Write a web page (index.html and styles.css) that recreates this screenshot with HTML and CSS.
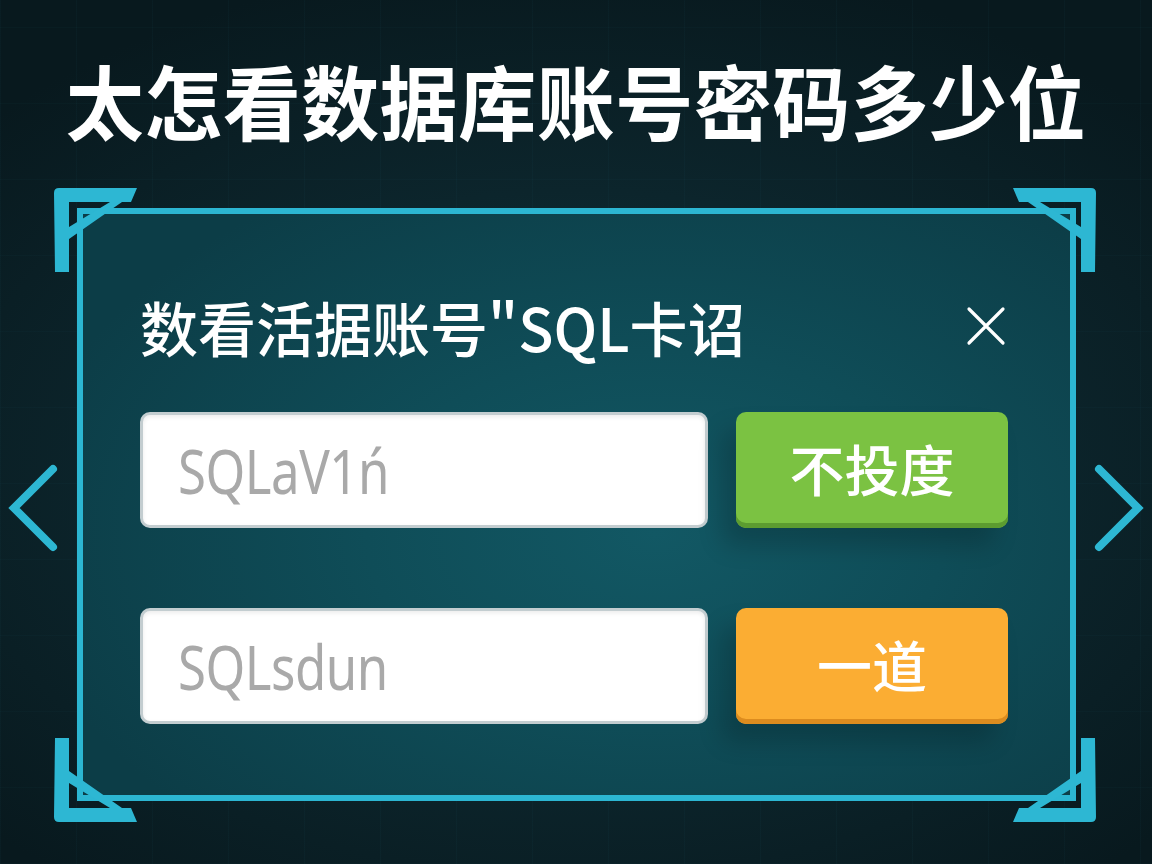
FILE: index.html
```html
<!DOCTYPE html>
<html lang="zh">
<head>
<meta charset="utf-8">
<title>太怎看数据库账号密码多少位</title>
<link rel="stylesheet" href="styles.css">
</head>
<body>
<div class="page">
  <h1 class="headline">太怎看数据库账号密码多少位</h1>

  <section class="panel">
    <header class="dialog-head">
      <h2 class="dialog-title">数看活据账号"SQL卡诏</h2>
      <button class="close" aria-label="关闭">
        <svg viewBox="0 0 40 40" width="40" height="40"><path d="M3 3 L37 37 M37 3 L3 37" stroke="#ffffff" stroke-width="3.2" stroke-linecap="round" fill="none"/></svg>
      </button>
    </header>
    <div class="row">
      <div class="field"><span class="placeholder">SQLaV1ń</span></div>
      <button class="btn btn-green">不投度</button>
    </div>
    <div class="row row-second">
      <div class="field"><span class="placeholder">SQLsdun</span></div>
      <button class="btn btn-orange">一道</button>
    </div>
  </section>

  <svg class="bracket br-tl" viewBox="0 0 84 86" width="84" height="86"><path d="M0 6 Q0 1 5 1 L83 1 L77 15 L15 15 L15 85 L1 85 Z M15 40 L56 15 L68 15 L15 52 Z" fill="#2db7d3"/></svg>
  <svg class="bracket br-tr" viewBox="0 0 84 86" width="84" height="86"><path d="M0 6 Q0 1 5 1 L83 1 L77 15 L15 15 L15 85 L1 85 Z M15 40 L56 15 L68 15 L15 52 Z" fill="#2db7d3"/></svg>
  <svg class="bracket br-bl" viewBox="0 0 84 86" width="84" height="86"><path d="M0 6 Q0 1 5 1 L83 1 L77 15 L15 15 L15 85 L1 85 Z M15 40 L56 15 L68 15 L15 52 Z" fill="#2db7d3"/></svg>
  <svg class="bracket br-br" viewBox="0 0 84 86" width="84" height="86"><path d="M0 6 Q0 1 5 1 L83 1 L77 15 L15 15 L15 85 L1 85 Z M15 40 L56 15 L68 15 L15 52 Z" fill="#2db7d3"/></svg>

  <svg class="chev chev-left" viewBox="0 0 52 92" width="52" height="92"><polyline points="45,7 6,46 45,85" fill="none" stroke="#2db7d3" stroke-width="8" stroke-linecap="round" stroke-linejoin="miter"/></svg>
  <svg class="chev chev-right" viewBox="0 0 52 92" width="52" height="92"><polyline points="7,7 46,46 7,85" fill="none" stroke="#2db7d3" stroke-width="8" stroke-linecap="round" stroke-linejoin="miter"/></svg>
</div>
</body>
</html>
```

FILE: styles.css
```css
html, body {
  margin: 0;
  padding: 0;
}

body {
  width: 1152px;
  height: 864px;
  overflow: hidden;
  background: #0a1d23;
  font-family: "Noto Sans", "Noto Sans CJK SC", sans-serif;
}

.page {
  position: relative;
  width: 1152px;
  height: 864px;
  overflow: hidden;
  background:
    repeating-linear-gradient(90deg, rgba(40, 120, 140, 0.05) 0 1px, transparent 1px 76px),
    repeating-linear-gradient(0deg, rgba(40, 120, 140, 0.04) 0 1px, transparent 1px 76px),
    radial-gradient(ellipse 70% 60% at 50% 55%, #12363f 0%, #0c252c 55%, #08191e 100%);
}

.headline {
  margin: 0;
  padding-top: 58px;
  height: 78px;
  line-height: 78px;
  text-align: center;
  font-family: "Noto Sans CJK SC", sans-serif;
  font-weight: 700;
  font-size: 78px;
  color: #ffffff;
  letter-spacing: 0.5px;
  white-space: nowrap;
  transform: scaleY(1.04);
}

.panel {
  box-sizing: border-box;
  margin: 72px 0 0 77px;
  width: 999px;
  height: 593px;
  border: 6px solid #2cb6d2;
  background:
    radial-gradient(ellipse 65% 70% at 58% 55%, #125864 0%, #0f4d58 45%, #0c3d47 100%);
  padding: 0 62px 0 57px;
  display: flex;
  flex-direction: column;
}

.dialog-head {
  display: flex;
  align-items: center;
  justify-content: space-between;
  height: 80px;
  margin-top: 72px;
  margin-bottom: 46px;
}

.dialog-title {
  margin: 0;
  font-family: "Noto Sans CJK SC", sans-serif;
  font-weight: 500;
  font-size: 58px;
  line-height: 80px;
  color: #ffffff;
  white-space: nowrap;
  display: inline-block;
  transform: scaleY(1.02);
  transform-origin: 0 50%;
}

.close {
  width: 40px;
  height: 40px;
  padding: 0;
  margin-right: 2px;
  border: none;
  background: transparent;
  display: flex;
}

.row {
  display: flex;
  gap: 28px;
  height: 116px;
}

.row-second {
  margin-top: 80px;
}

.field {
  box-sizing: border-box;
  width: 568px;
  height: 116px;
  background: #ffffff;
  border: 3px solid #c3cdd0;
  border-radius: 10px;
  box-shadow: inset 0 2px 4px rgba(0, 0, 0, 0.08);
  display: flex;
  align-items: center;
  padding-left: 35px;
}

.placeholder {
  display: inline-block;
  font-family: "Noto Sans", sans-serif;
  font-size: 51px;
  color: #a9a9a9;
  letter-spacing: -0.5px;
  transform: scaleY(1.2);
}

.btn {
  box-sizing: border-box;
  width: 272px;
  height: 116px;
  border: none;
  border-radius: 10px;
  font-family: "Noto Sans CJK SC", sans-serif;
  font-weight: 500;
  font-size: 55px;
  color: #ffffff;
  padding: 0 0 6px 0;
  display: flex;
  align-items: center;
  justify-content: center;
}

.btn-green {
  background: #7bc242;
  box-shadow: inset 0 -5px 0 #5c9c30, -14px 18px 24px rgba(0, 0, 0, 0.18);
}

.btn-orange {
  background: #fbad33;
  box-shadow: inset 0 -5px 0 #dc8c1f, -14px 18px 24px rgba(0, 0, 0, 0.18);
}

.bracket {
  position: absolute;
}

.br-tl { left: 54px; top: 187px; }
.br-tr { left: 1012px; top: 187px; transform: scaleX(-1); }
.br-bl { left: 54px; top: 737px; transform: scaleY(-1); }
.br-br { left: 1012px; top: 737px; transform: scale(-1, -1); }

.chev {
  position: absolute;
  top: 462px;
}

.chev-left { left: 8px; }
.chev-right { left: 1092px; }
```
